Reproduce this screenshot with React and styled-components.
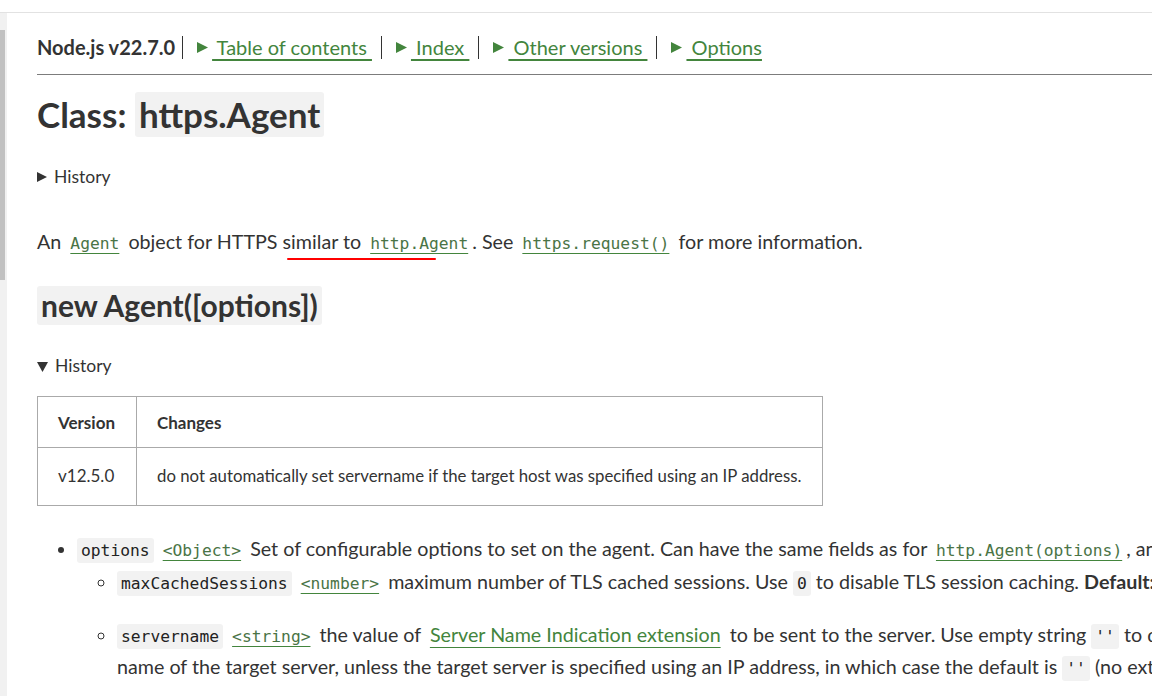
import styled, { createGlobalStyle } from "styled-components";

const GlobalStyle = createGlobalStyle`
  html, body {
    margin: 0;
    padding: 0;
    overflow: hidden;
    background: #fff;
  }
  body {
    font-family: Lato, "Open Sans", sans-serif;
    color: #333;
  }
`;

const Page = styled.div`
  width: 1152px;
  height: 696px;
  overflow: hidden;
  display: flex;
  flex-direction: column;
`;

const TopEdge = styled.div`
  height: 12px;
  flex: none;
  border-bottom: 1px solid #e2e2e2;
`;

const Body = styled.div`
  flex: 1;
  display: flex;
  min-height: 0;
`;

const Rail = styled.div`
  width: 7px;
  flex: none;
  background: #f1f1f1;
  padding-top: 17px;
`;

const Thumb = styled.div`
  width: 5px;
  height: 250px;
  background: #c1c1c1;
`;

const Main = styled.main`
  flex: none;
  width: 1500px;
  padding-left: 30px;
`;

const Header = styled.header`
  display: flex;
  align-items: center;
  padding: 22px 0 14px;
  line-height: 25px;
  border-bottom: 1px solid #7c7c7c;
  width: 1200px;
`;

const Title = styled.span`
  font-size: 20px;
  font-weight: 700;
  padding-right: 7px;
`;

const NavItem = styled.span`
  display: flex;
  align-items: center;
  border-left: 1px solid #333;
  height: 23px;
  padding-left: 14px;
  padding-right: 9px;
`;

const NavLink = styled.a`
  color: #43853d;
  font-size: 20px;
  text-decoration: underline;
  text-underline-offset: 4px;
  white-space: pre;
  cursor: pointer;
`;

const TriBox = styled.svg`
  flex: none;
  margin-right: ${(p) => p.$gap}px;
`;

const Tri = ({ color = "#43853d", size = 11, down = false, gap = 4 }) => (
  <TriBox width={size} height={size} viewBox="0 0 10 10" $gap={gap}>
    {down ? (
      <polygon points="0,1 10,1 5,10" fill={color} />
    ) : (
      <polygon points="0,0 10,5 0,10" fill={color} />
    )}
  </TriBox>
);

const H2 = styled.h2`
  margin: 17px 0 0;
  font-size: 35px;
  font-weight: 700;
  line-height: 45px;
`;

const HCode = styled.span`
  display: inline-block;
  vertical-align: top;
  background: #f2f2f2;
  border-radius: 3px;
  padding: 0 4px;
  line-height: ${(p) => p.$h}px;
`;

const H3 = styled.h3`
  margin: 28px 0 0;
  font-size: 30px;
  font-weight: 700;
  line-height: 39px;
`;

const Summary = styled.div`
  margin-top: ${(p) => p.$mt}px;
  display: flex;
  align-items: center;
  gap: 7px;
  font-size: 17.5px;
  line-height: 24px;
`;

const P = styled.p`
  margin: 37px 0 0;
  font-size: 19.7px;
  line-height: 32px;
`;

const CodeLink = styled.a`
  font-family: "DejaVu Sans Mono", "Liberation Mono", monospace;
  font-size: 16.3px;
  line-height: 1;
  color: #4a7446;
  text-decoration: underline;
  text-decoration-color: #43853d;
  text-underline-offset: 4px;
  padding: 0 4px;
  cursor: pointer;
`;

const TextLink = styled.a`
  color: #43853d;
  text-decoration: underline;
  text-underline-offset: 5px;
  padding: 0 4px;
  cursor: pointer;
`;

const Code = styled.code`
  font-family: "DejaVu Sans Mono", "Liberation Mono", monospace;
  font-size: 16.3px;
  line-height: 1;
  background: #f2f2f2;
  border-radius: 3px;
  padding: 3px 4px;
  color: #222;
`;

const Marked = styled.span`
  position: relative;
  &::after {
    content: "";
    position: absolute;
    left: 4px;
    width: 149px;
    bottom: -7px;
    height: 2px;
    background: #f00;
    border-radius: 1px;
  }
`;

const Table = styled.table`
  margin-top: 18px;
  border-collapse: collapse;
  width: 786px;
  color: #333;
`;

const Th = styled.th`
  border: 1px solid #aaa;
  text-align: left;
  font-weight: 700;
  font-size: 17px;
  height: 51px;
  padding: 0 20px;
  width: ${(p) => (p.$w ? `${p.$w}px` : "auto")};
  box-sizing: border-box;
`;

const Td = styled.td`
  border: 1px solid #aaa;
  font-size: ${(p) => p.$size}px;
  height: 55px;
  padding: 0 20px 2px;
`;

const List = styled.ul`
  margin: 27px 0 0;
  padding-left: 40px;
  font-size: 19.7px;
  line-height: 32px;
  white-space: nowrap;
  list-style: disc;
`;

const SubList = styled.ul`
  margin: 1px 0 0;
  padding-left: 40px;
  list-style: circle;
`;

const Item = styled.li`
  margin-top: ${(p) => p.$mt || 0}px;
`;

export default function App() {
  return (
    <Page>
      <GlobalStyle />
      <TopEdge />
      <Body>
        <Rail>
          <Thumb />
        </Rail>
        <Main>
          <Header>
            <Title>Node.js v22.7.0</Title>
            <NavItem>
              <Tri />
              <NavLink>{" Table of contents "}</NavLink>
            </NavItem>
            <NavItem>
              <Tri />
              <NavLink>{" Index "}</NavLink>
            </NavItem>
            <NavItem>
              <Tri />
              <NavLink>{" Other versions "}</NavLink>
            </NavItem>
            <NavItem>
              <Tri />
              <NavLink>{" Options"}</NavLink>
            </NavItem>
          </Header>

          <H2>
            Class: <HCode $h={45}>https.Agent</HCode>
          </H2>

          <Summary $mt={28}>
            <Tri color="#333" size={10} gap={0} />
            History
          </Summary>

          <P>
            An <CodeLink>Agent</CodeLink> object for HTTPS{" "}
            <Marked>
              similar to <CodeLink>http.Agent</CodeLink>
            </Marked>
            . See <CodeLink>https.request()</CodeLink> for more information.
          </P>

          <H3>
            <HCode $h={39}>new Agent([options])</HCode>
          </H3>

          <Summary $mt={29}>
            <Tri color="#333" size={11} down gap={0} />
            History
          </Summary>

          <Table>
            <thead>
              <tr>
                <Th $w={99}>Version</Th>
                <Th>Changes</Th>
              </tr>
            </thead>
            <tbody>
              <tr>
                <Td $size={17}>v12.5.0</Td>
                <Td $size={16.8}>
                  do not automatically set servername if the target host was
                  specified using an IP address.
                </Td>
              </tr>
            </tbody>
          </Table>

          <List>
            <Item>
              <Code>options</Code> <CodeLink>&lt;Object&gt;</CodeLink> Set of
              configurable options to set on the agent. Can have the same fields
              as for <CodeLink>http.Agent(options)</CodeLink>, and
              <SubList>
                <Item>
                  <Code>maxCachedSessions</Code>{" "}
                  <CodeLink>&lt;number&gt;</CodeLink> maximum number of TLS
                  cached sessions. Use <Code>0</Code> to disable TLS session
                  caching. <b>Default:</b> <Code>100</Code>.
                </Item>
                <Item $mt={21}>
                  <Code>servername</Code> <CodeLink>&lt;string&gt;</CodeLink>{" "}
                  the value of{" "}
                  <TextLink>Server Name Indication extension</TextLink> to be
                  sent to the server. Use empty string <Code>''</Code> to
                  disable sending the extension. <b>Default:</b> host
                  <br />
                  name of the target server, unless the target server is
                  specified using an IP address, in which case the default is{" "}
                  <Code>''</Code> (no extension).
                </Item>
              </SubList>
            </Item>
          </List>
        </Main>
      </Body>
    </Page>
  );
}
